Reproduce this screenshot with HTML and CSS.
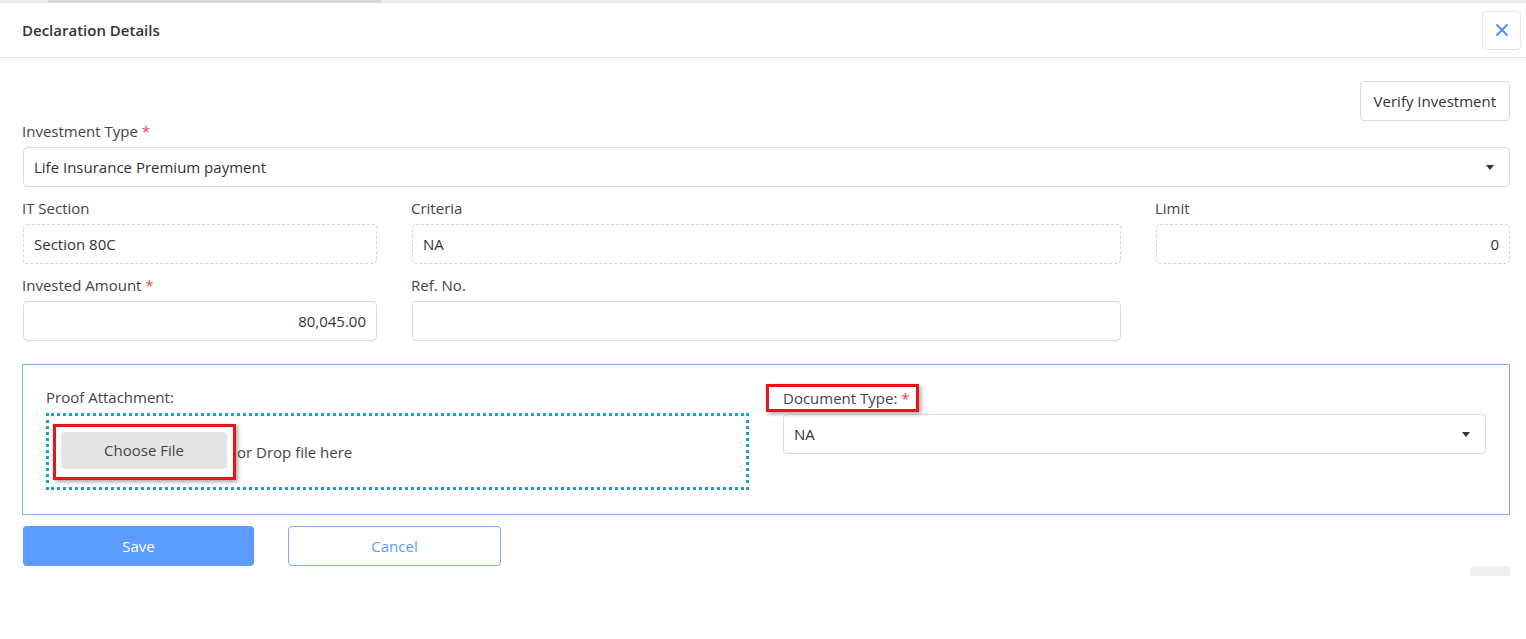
FILE: index.html
```html
<!DOCTYPE html>
<html lang="en">
<head>
    <meta charset="UTF-8">
    <title>Declaration Details</title>
    <link rel="stylesheet" href="styles.css">
</head>
<body>
    <div class="topstrip"><div class="topstrip-seg"></div></div>

    <div class="modal-header">
        <h4 class="modal-title">Declaration Details</h4>
        <button class="close-btn" aria-label="Close">
            <svg width="14" height="14" viewBox="0 0 14 14"><path d="M2 2 L12 12 M12 2 L2 12" stroke="#4a8ff0" stroke-width="1.8" fill="none" stroke-linecap="round"/></svg>
        </button>
    </div>

    <div class="modal-body">
        <div class="verify-row">
            <button class="btn-outline">Verify Investment</button>
        </div>

        <div class="field">
            <label>Investment Type <span class="req">*</span></label>
            <div class="select">Life Insurance Premium payment<span class="caret"></span></div>
        </div>

        <div class="grid">
            <div class="field">
                <label>IT Section</label>
                <div class="input readonly">Section 80C</div>
            </div>
            <div class="field">
                <label>Criteria</label>
                <div class="input readonly">NA</div>
            </div>
            <div class="field">
                <label>Limit</label>
                <div class="input readonly right">0</div>
            </div>
            <div class="field">
                <label>Invested Amount <span class="req">*</span></label>
                <div class="input right">80,045.00</div>
            </div>
            <div class="field">
                <label>Ref. No.</label>
                <div class="input"></div>
            </div>
        </div>

        <div class="proof-box">
            <div class="proof-col">
                <label>Proof Attachment:</label>
                <div class="dropzone">
                    <span class="highlight">
                        <button class="btn-file">Choose File</button>
                    </span>
                    <span class="drop-text">or Drop file here</span>
                </div>
            </div>
            <div class="doc-col">
                <label class="doc-label"><span class="highlight-label">Document Type: <span class="req">*</span></span></label>
                <div class="select">NA<span class="caret"></span></div>
            </div>
        </div>

        <div class="actions">
            <button class="btn-save">Save</button>
            <button class="btn-cancel">Cancel</button>
        </div>
        <div class="footer-tab"></div>
    </div>
</body>
</html>
```

FILE: styles.css
```css
body {
    margin: 0;
    font-family: "Open Sans", Lato, sans-serif;
    font-size: 15px;
    color: #333;
    background: #fff;
}
button {
    font-family: inherit;
    font-size: 15px;
    cursor: pointer;
}
.topstrip {
    height: 3px;
    background: #ececec;
}
.topstrip-seg {
    margin-left: 48px;
    width: 334px;
    height: 3px;
    background: #d9d9d9;
}
.modal-header {
    height: 54px;
    display: flex;
    align-items: center;
    justify-content: space-between;
    padding: 0 5px 0 22px;
    border-bottom: 1px solid #e3e3e3;
}
.modal-title {
    margin: 0;
    font-size: 15px;
    font-weight: 600;
    color: #333;
}
.close-btn {
    width: 39px;
    height: 39px;
    border: 1px solid #e6e6e6;
    border-radius: 4px;
    background: #fff;
    display: flex;
    align-items: center;
    justify-content: center;
    padding: 0;
}
.modal-body {
    padding: 23px 16px 0 22px;
}
.verify-row {
    display: flex;
    justify-content: flex-end;
}
.btn-outline {
    height: 40px;
    padding: 0 13px;
    border: 1px solid #dcdcdc;
    border-radius: 4px;
    background: #fff;
    color: #333;
}
label {
    display: block;
    color: #444;
    line-height: 20px;
    margin-bottom: 6px;
}
.req {
    color: #e24a4a;
}
.field {
    margin-bottom: 11px;
}
.select, .input {
    height: 40px;
    box-sizing: border-box;
    border: 1px solid #dcdcdc;
    border-radius: 4px;
    display: flex;
    align-items: center;
    padding: 0 10px;
    color: #333;
    margin-left: 1px;
}
.select {
    justify-content: space-between;
}
.caret {
    width: 0;
    height: 0;
    border-left: 4px solid transparent;
    border-right: 4px solid transparent;
    border-top: 5px solid #333;
    margin-right: 5px;
}
.readonly {
    border-style: dashed;
    border-color: #d8d8d8;
}
.right {
    justify-content: flex-end;
}
.grid {
    display: grid;
    grid-template-columns: 355px 710px 355px;
    column-gap: 34px;
}
.proof-box {
    margin-top: 12px;
    border: 1px solid #7fb2f5;
    display: flex;
    padding: 22px 23px 24px 23px;
    gap: 34px;
}
.proof-col {
    width: 703px;
}
.dropzone {
    height: 77px;
    box-sizing: border-box;
    border: 3px dotted #1a9fcf;
    display: flex;
    align-items: center;
    padding-left: 4px;
}
.highlight {
    border: 3px solid #e8141a;
    padding: 5px 6px 8px 5px;
    box-shadow: 2px 2px 4px rgba(0,0,0,0.35);
    display: inline-flex;
}
.btn-file {
    width: 166px;
    height: 37px;
    border: none;
    border-radius: 4px;
    background: #e5e4e4;
    color: #444;
}
.drop-text {
    margin-left: 1px;
    color: #444;
}
.doc-col {
    flex: 1;
}
.doc-label {
    margin-top: -3px;
    margin-bottom: 2px;
    margin-left: -17px;
}
.highlight-label {
    display: inline-block;
    border: 3px solid #e8141a;
    padding: 1px 6px 1px 14px;
    line-height: 20px;
    box-shadow: 2px 2px 4px rgba(0,0,0,0.35);
}
.doc-col .select {
    margin-left: 0;
}
.actions {
    display: flex;
    gap: 34px;
    margin-top: 11px;
}
.btn-save {
    width: 231px;
    height: 40px;
    border: none;
    border-radius: 4px;
    background: #5a9cff;
    color: #fff;
    margin-left: 1px;
}
.btn-cancel {
    width: 213px;
    height: 40px;
    border: 1px solid #7fb0f5;
    border-radius: 4px;
    background: #fff;
    color: #5a9cff;
}
.footer-tab {
    width: 40px;
    height: 10px;
    margin: 0 0 0 auto;
    background: #efefef;
    border-radius: 4px 4px 0 0;
}
```
